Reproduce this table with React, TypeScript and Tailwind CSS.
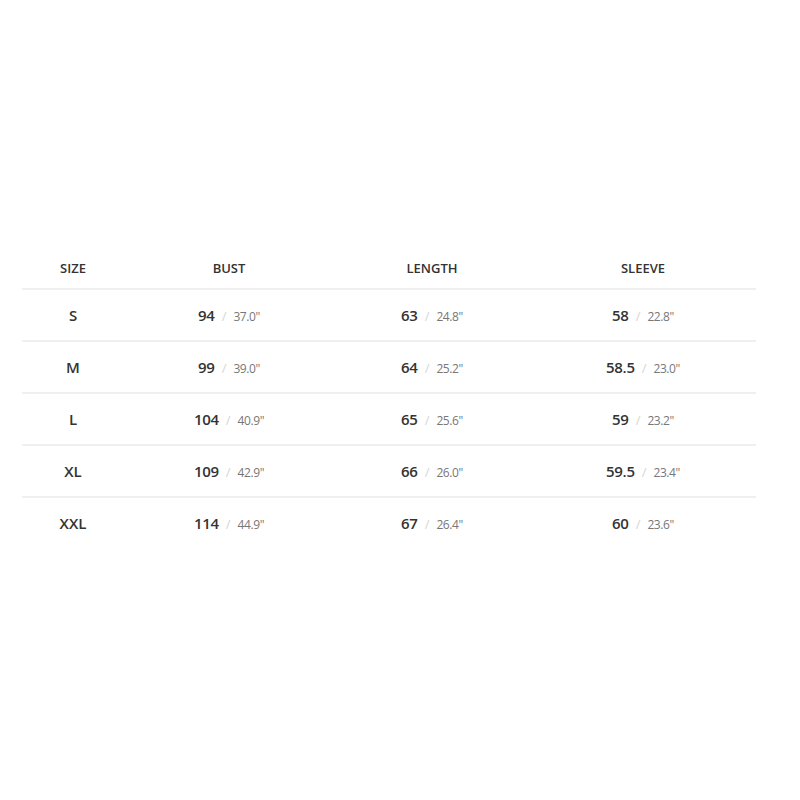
const rows = [
  { size: 'S', bust: ['94', '37.0"'], length: ['63', '24.8"'], sleeve: ['58', '22.8"'] },
  { size: 'M', bust: ['99', '39.0"'], length: ['64', '25.2"'], sleeve: ['58.5', '23.0"'] },
  { size: 'L', bust: ['104', '40.9"'], length: ['65', '25.6"'], sleeve: ['59', '23.2"'] },
  { size: 'XL', bust: ['109', '42.9"'], length: ['66', '26.0"'], sleeve: ['59.5', '23.4"'] },
  { size: 'XXL', bust: ['114', '44.9"'], length: ['67', '26.4"'], sleeve: ['60', '23.6"'] },
]

const cols = 'grid grid-cols-[102px_210px_196px_226px]'

function Measure({ value }: { value: string[] }) {
  return (
    <div className="flex items-baseline justify-center">
      <span className="text-[15px] font-semibold tracking-[-0.3px] text-[#333]">{value[0]}</span>
      <span className="mx-[7px] text-[13px] text-[#d6d6d6]">/</span>
      <span className="text-[12px] tracking-[-0.4px] text-[#777]">{value[1]}</span>
    </div>
  )
}

export default function App() {
  return (
    <div className="min-h-[800px] bg-white pt-[250px] pl-[22px]" style={{ fontFamily: '"Open Sans", "Noto Sans", sans-serif' }}>
      <div className="w-[734px]">
        <div className={`${cols} h-[40px] items-center border-b-2 border-[#efefef] text-[13px] font-semibold text-[#333]`}>
          <div className="text-center">SIZE</div>
          <div className="text-center">BUST</div>
          <div className="text-center">LENGTH</div>
          <div className="text-center">SLEEVE</div>
        </div>
        {rows.map((r, i) => (
          <div
            key={r.size}
            className={`${cols} h-[52px] items-center border-b-2 ${i < rows.length - 1 ? 'border-[#efefef]' : 'border-transparent'}`}
          >
            <div className="text-center text-[15px] font-semibold text-[#333]">{r.size}</div>
            <Measure value={r.bust} />
            <Measure value={r.length} />
            <Measure value={r.sleeve} />
          </div>
        ))}
      </div>
    </div>
  )
}
